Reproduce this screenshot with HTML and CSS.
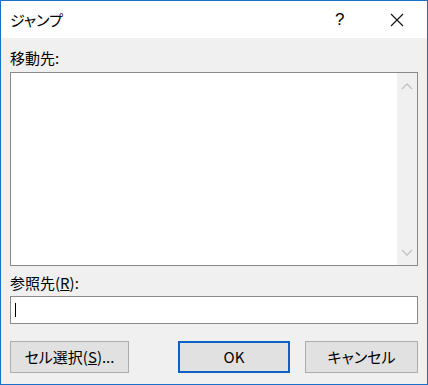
FILE: index.html
```html
<!DOCTYPE html>
<html lang="ja">
<head>
  <meta charset="UTF-8">
  <title>ジャンプ</title>
  <link rel="stylesheet" href="styles.css">
</head>
<body>
  <div class="dialog">
    <div class="titlebar">
      <span class="title">ジャンプ</span>
      <span class="help">?</span>
      <span class="close">
        <svg width="14" height="14" viewBox="0 0 14 14"><path d="M1 1L13 13M13 1L1 13" stroke="#111" stroke-width="1.1" fill="none"/></svg>
      </span>
    </div>
    <div class="content">
      <div class="label first">移動先:</div>
      <div class="listbox">
        <div class="list-items"></div>
        <div class="scrollbar">
          <svg width="12" height="8" viewBox="0 0 12 8"><path d="M1 7L6 2L11 7" stroke="#c2c2c2" stroke-width="1.3" fill="none"/></svg>
          <svg width="12" height="8" viewBox="0 0 12 8"><path d="M1 1L6 6L11 1" stroke="#c2c2c2" stroke-width="1.3" fill="none"/></svg>
        </div>
      </div>
      <div class="label second">参照先(<u>R</u>):</div>
      <div class="textbox"><span class="caret"></span></div>
      <div class="actions">
        <button class="btn btn-select">セル選択(<u>S</u>)...</button>
        <button class="btn btn-ok">OK</button>
        <button class="btn btn-cancel">キャンセル</button>
      </div>
    </div>
  </div>
</body>
</html>
```

FILE: styles.css
```css
html, body {
  margin: 0;
  padding: 0;
}
body {
  font-family: "Noto Sans CJK JP", "Noto Sans", sans-serif;
  font-size: 15px;
  font-feature-settings: "palt";
  color: #000;
  background: #f0f0f0;
}
.dialog {
  width: 428px;
  height: 385px;
  box-sizing: border-box;
  border: 1px solid #1c6fc9;
  background: #f0f0f0;
  display: flex;
  flex-direction: column;
}
.titlebar {
  height: 37px;
  background: #fff;
  display: flex;
  align-items: center;
  padding-left: 9px;
}
.title {
  flex: 1;
  line-height: 20px;
}
.help {
  font-family: "Liberation Sans", sans-serif;
  font-size: 17px;
  width: 10px;
  margin-right: 45px;
}
.close {
  display: flex;
  margin-right: 23px;
}
.content {
  padding: 0 9px;
}
.label {
  line-height: 20px;
  height: 20px;
}
.label.first {
  padding-top: 10px;
  margin-bottom: 4px;
}
.label.second {
  padding-top: 7px;
  margin-bottom: 3px;
}
.listbox {
  height: 194px;
  box-sizing: border-box;
  border: 1px solid #8a8a8a;
  background: #fff;
  display: flex;
}
.list-items {
  flex: 1;
}
.scrollbar {
  width: 20px;
  background: #f0f0f0;
  display: flex;
  flex-direction: column;
  justify-content: space-between;
  align-items: center;
  padding: 9px 0 8px;
}
.textbox {
  height: 28px;
  box-sizing: border-box;
  border: 1px solid #8a8a8a;
  background: #fff;
  padding: 6px 4px;
}
.caret {
  display: block;
  width: 1px;
  height: 14px;
  background: #000;
}
.actions {
  display: flex;
  margin-top: 17px;
}
.btn {
  font-family: inherit;
  font-size: 15px;
  font-feature-settings: "palt";
  height: 32px;
  box-sizing: border-box;
  border: 1px solid #adadad;
  background: #e1e1e1;
  color: #000;
  padding: 0;
  line-height: 20px;
}
.btn-select {
  width: 119px;
}
.btn-ok {
  width: 112px;
  margin-left: auto;
  border: 2px solid #0f5fc4;
}
.btn-cancel {
  width: 113px;
  margin-left: 15px;
}
```
